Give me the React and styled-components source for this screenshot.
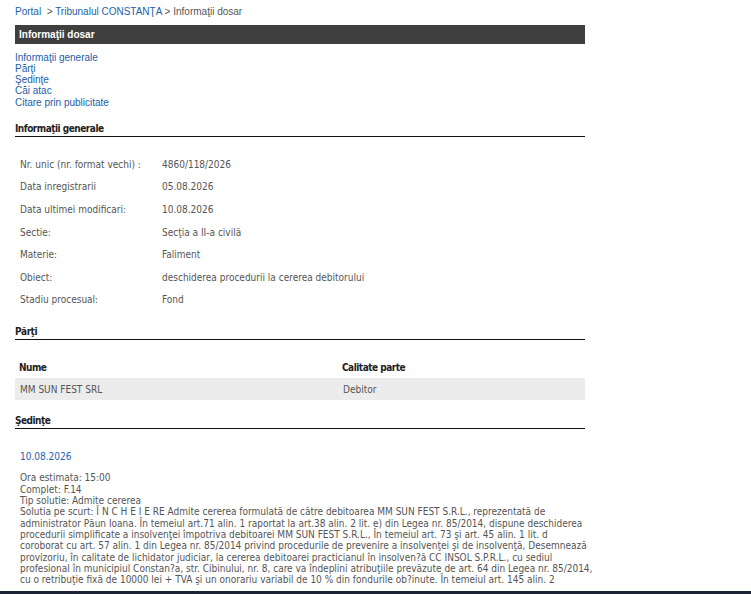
import React from 'react';
import styled, { createGlobalStyle } from 'styled-components';

const GlobalStyle = createGlobalStyle`
  body {
    margin: 0;
    background: #fff;
    font-family: "Liberation Sans", Arial, sans-serif;
  }
`;

const generalInfo = [
  ['Nr. unic (nr. format vechi) :', '4860/118/2026'],
  ['Data inregistrarii', '05.08.2026'],
  ['Data ultimei modificari:', '10.08.2026'],
  ['Sectie:', 'Secţia a II-a civilă'],
  ['Materie:', 'Faliment'],
  ['Obiect:', 'deschiderea procedurii la cererea debitorului'],
  ['Stadiu procesual:', 'Fond'],
];

const hearingLines = [
  'Ora estimata: 15:00',
  'Complet: F.14',
  'Tip solutie: Admite cererea',
  'Solutia pe scurt: Î N C H E I E RE Admite cererea formulată de către debitoarea MM SUN FEST S.R.L., reprezentată de',
  'administrator Păun Ioana. În temeiul art.71 alin. 1 raportat la art.38 alin. 2 lit. e) din Legea nr. 85/2014, dispune deschiderea',
  'procedurii simplificate a insolvenţei împotriva debitoarei MM SUN FEST S.R.L., În temeiul art. 73 şi art. 45 alin. 1 lit. d',
  'coroborat cu art. 57 alin. 1 din Legea nr. 85/2014 privind procedurile de prevenire a insolvenţei şi de insolvenţă, Desemnează',
  'provizoriu, în calitate de lichidator judiciar, la cererea debitoarei practicianul în insolven?ă CC INSOL S.P.R.L., cu sediul',
  'profesional în municipiul Constan?a, str. Cibinului, nr. 8, care va îndeplini atribuţiile prevăzute de art. 64 din Legea nr. 85/2014,',
  'cu o retribuţie fixă de 10000 lei + TVA şi un onorariu variabil de 10 % din fondurile ob?inute. În temeiul art. 145 alin. 2',
];

const Page = styled.div`
  width: 570px;
  padding: 5px 0 0 15px;
`;

const Crumbs = styled.div`
  font-size: 10px;
  line-height: 14px;
  color: #555;
  a {
    color: #1c5ea8;
    text-decoration: none;
  }
`;

const TitleBar = styled.div`
  margin-top: 6px;
  height: 19px;
  background: #3f3f3f;
  color: #fff;
  font-weight: bold;
  font-size: 10px;
  line-height: 19px;
  padding-left: 4px;
`;

const Anchors = styled.nav`
  margin-top: 8px;
  display: flex;
  flex-direction: column;
  font-size: 10px;
  line-height: 11px;
`;

const Anchor = styled.a`
  color: #1c5ea8;
  text-decoration: none;
  margin-top: ${p => (p.$spaced ? '1px' : '0')};
`;

const SectionTitle = styled.h3`
  margin: ${p => p.$top}px 0 0;
  padding-bottom: 1px;
  border-bottom: 1px solid #111;
  font-family: "DejaVu Sans Condensed", "DejaVu Sans", sans-serif;
  font-size: 10px;
  line-height: 13px;
  font-weight: bold;
  letter-spacing: -0.5px;
  color: #222;
`;

const InfoTable = styled.div`
  margin-top: 16px;
  display: grid;
  grid-template-columns: 142px 1fr;
  grid-auto-rows: 22.6px;
  align-items: center;
  font-family: "DejaVu Sans Condensed", "DejaVu Sans", sans-serif;
  font-size: 10px;
  color: #555;
  > span {
    padding-left: 5px;
  }
`;

const PartyTable = styled.div`
  margin-top: 16px;
  font-family: "DejaVu Sans Condensed", "DejaVu Sans", sans-serif;
  font-size: 10px;
`;

const PartyRow = styled.div`
  display: grid;
  grid-template-columns: 323px 1fr;
  align-items: center;
  height: 22px;
  background: ${p => (p.$head ? 'transparent' : '#ececec')};
  color: ${p => (p.$head ? '#222' : '#555')};
  font-weight: ${p => (p.$head ? 'bold' : 'normal')};
  letter-spacing: ${p => (p.$head ? '-0.5px' : '0')};
  > span {
    padding-left: ${p => (p.$head ? '4px' : '5px')};
  }
`;

const Hearing = styled.div`
  padding-left: 5px;
  font-family: "DejaVu Sans Condensed", "DejaVu Sans", sans-serif;
  font-size: 10px;
  color: #555;
`;

const HearingDate = styled.div`
  margin-top: 21px;
  color: #1a64b0;
  line-height: 13px;
`;

const HearingText = styled.div`
  margin-top: 9px;
  line-height: 11.35px;
  white-space: nowrap;
`;

const Taskbar = styled.div`
  position: fixed;
  left: 0;
  right: 0;
  bottom: 0;
  height: 3px;
  background: #1c2535;
`;

export default function App() {
  return (
    <>
      <GlobalStyle />
      <Page>
        <Crumbs>
          <a href="#">Portal</a> &nbsp;&gt; <a href="#">Tribunalul CONSTANŢA</a> &gt; Informaţii dosar
        </Crumbs>
        <TitleBar>Informaţii dosar</TitleBar>
        <Anchors>
          <Anchor href="#">Informaţii generale</Anchor>
          <Anchor href="#">Părţi</Anchor>
          <Anchor href="#">Şedinţe</Anchor>
          <Anchor href="#">Căi atac</Anchor>
          <Anchor href="#" $spaced>Citare prin publicitate</Anchor>
        </Anchors>

        <SectionTitle $top={14}>Informaţii generale</SectionTitle>
        <InfoTable>
          {generalInfo.map(([label, value]) => (
            <React.Fragment key={label}>
              <span>{label}</span>
              <span>{value}</span>
            </React.Fragment>
          ))}
        </InfoTable>

        <SectionTitle $top={14}>Părţi</SectionTitle>
        <PartyTable>
          <PartyRow $head>
            <span>Nume</span>
            <span>Calitate parte</span>
          </PartyRow>
          <PartyRow>
            <span>MM SUN FEST SRL</span>
            <span>Debitor</span>
          </PartyRow>
        </PartyTable>

        <SectionTitle $top={14}>Şedinţe</SectionTitle>
        <Hearing>
          <HearingDate>10.08.2026</HearingDate>
          <HearingText>
            {hearingLines.map(line => (
              <div key={line}>{line}</div>
            ))}
          </HearingText>
        </Hearing>
      </Page>
      <Taskbar />
    </>
  );
}
